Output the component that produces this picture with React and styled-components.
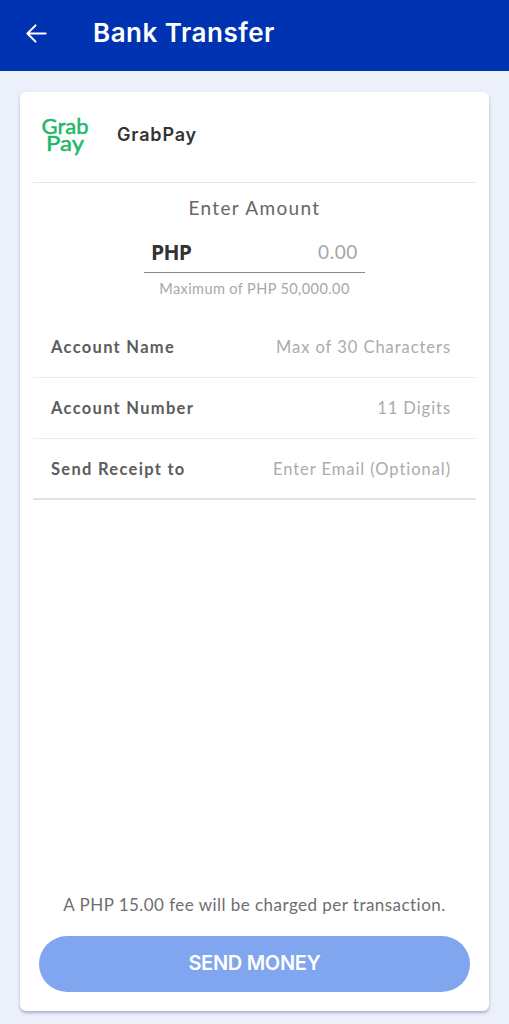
import React from 'react';
import styled, { createGlobalStyle } from 'styled-components';

const Global = createGlobalStyle`
html,body{margin:0;padding:0;background:#ebf0fb;}
*{box-sizing:border-box;}
`;

const fields = [
  { label: 'Account Name', hint: 'Max of 30 Characters' },
  { label: 'Account Number', hint: '11 Digits' },
  { label: 'Send Receipt to', hint: 'Enter Email (Optional)' },
];

const App = () => {
  return (
    <Page>
      <Global />
      <Header>
        <BackIcon viewBox="0 0 24 24" fill="none" stroke="#fff" strokeWidth="2.1" strokeLinecap="round" strokeLinejoin="round">
          <path d="M21.5 12H2.5M11 3.5 2.5 12l8.5 8.5" />
        </BackIcon>
        <Title>Bank Transfer</Title>
      </Header>
      <Content>
        <Card>
          <Provider>
            <Logo viewBox="0 0 48 40">
              <text x="0.5" y="16.5" textLength="47" lengthAdjust="spacingAndGlyphs">Grab</text>
              <text x="5" y="34" textLength="38" lengthAdjust="spacingAndGlyphs">Pay</text>
            </Logo>
            <ProviderName>GrabPay</ProviderName>
          </Provider>
          <AmountSection>
            <AmountLabel>Enter Amount</AmountLabel>
            <AmountInput>
              <Currency>PHP</Currency>
              <AmountValue>0.00</AmountValue>
            </AmountInput>
            <AmountNote>Maximum of PHP 50,000.00</AmountNote>
          </AmountSection>
          <Fields>
            {fields.map((f) => (
              <FieldRow key={f.label}>
                <FieldLabel>{f.label}</FieldLabel>
                <FieldHint>{f.hint}</FieldHint>
              </FieldRow>
            ))}
          </Fields>
          <Footer>
            <FeeNote>A PHP 15.00 fee will be charged per transaction.</FeeNote>
            <SendButton>SEND MONEY</SendButton>
          </Footer>
        </Card>
      </Content>
    </Page>
  );
};

export default App;

const Page = styled.div`
width:509px;
height:1024px;
display:flex;
flex-direction:column;
background:#ebf0fb;
overflow:hidden;
`

const Header = styled.header`
height:71px;
flex:none;
background:#0033b1;
display:flex;
align-items:center;
padding:0 0 5px 25px;
`

const BackIcon = styled.svg`
width:23px;
height:23px;
flex:none;
`

const Title = styled.h1`
margin:0 0 0 45px;
font:600 26px/32px Inter,"Noto Sans",sans-serif;
letter-spacing:.5px;
color:#fff;
`

const Content = styled.main`
flex:1;
padding:21px 20px 13px;
display:flex;
`

const Card = styled.section`
flex:1;
background:#fff;
border-radius:6px;
box-shadow:0 2px 3px rgba(90,100,125,.45);
padding:0 13px;
display:flex;
flex-direction:column;
`

const Provider = styled.div`
height:91px;
flex:none;
display:flex;
align-items:center;
padding:0 0 4px 8px;
border-bottom:1px solid #e6e6e6;
`

const Logo = styled.svg`
width:48px;
height:40px;
margin-top:4px;
flex:none;
overflow:visible;
text{
  font:400 22px Lato,sans-serif;
  fill:#1fb868;
  stroke:#1fb868;
  stroke-width:.5px;
  stroke-linejoin:round;
}
`

const ProviderName = styled.span`
margin-left:28px;
font:600 18px/24px Inter,"Noto Sans",sans-serif;
letter-spacing:.85px;
color:#333;
`

const AmountSection = styled.div`
display:flex;
flex-direction:column;
align-items:center;
padding-top:13px;
`

const AmountLabel = styled.div`
font:400 19px/24px Lato,sans-serif;
letter-spacing:1.35px;
color:#666;
`

const AmountInput = styled.div`
width:221px;
height:45px;
margin-top:8px;
padding:3px 7px 0;
display:flex;
align-items:center;
justify-content:space-between;
border-bottom:1.5px solid #8a8a8a;
`

const Currency = styled.span`
font:700 21px/26px "Open Sans",sans-serif;
letter-spacing:-0.8px;
color:#333;
`

const AmountValue = styled.span`
font:400 19px/26px Lato,sans-serif;
letter-spacing:.6px;
color:#a6a6a6;
`

const AmountNote = styled.div`
margin-top:7px;
font:400 14.5px/18px Lato,sans-serif;
letter-spacing:.4px;
color:#a8a8a8;
`

const Fields = styled.div`
margin-top:19px;
display:flex;
flex-direction:column;
`

const FieldRow = styled.div`
height:61px;
padding:0 25px 0 18px;
display:flex;
align-items:center;
justify-content:space-between;
border-bottom:1px solid #ececec;
&:last-child{
  border-bottom:2px solid #e2e2e2;
}
`

const FieldLabel = styled.span`
font:700 16.5px/22px Lato,sans-serif;
letter-spacing:1.3px;
color:#5c5c5c;
`

const FieldHint = styled.span`
font:400 16.5px/22px Lato,sans-serif;
letter-spacing:.95px;
color:#ababab;
`

const Footer = styled.div`
margin-top:auto;
padding:0 6px 19px;
display:flex;
flex-direction:column;
align-items:center;
`

const FeeNote = styled.p`
margin:0 0 20px;
font:400 17px/22px Lato,sans-serif;
letter-spacing:.46px;
color:#6e6e6e;
`

const SendButton = styled.button`
width:100%;
height:56px;
border:0;
border-radius:28px;
padding-bottom:3px;
background:#7fa6ef;
color:#fff;
font:600 20px/26px Inter,"Noto Sans",sans-serif;
letter-spacing:-0.3px;
`
